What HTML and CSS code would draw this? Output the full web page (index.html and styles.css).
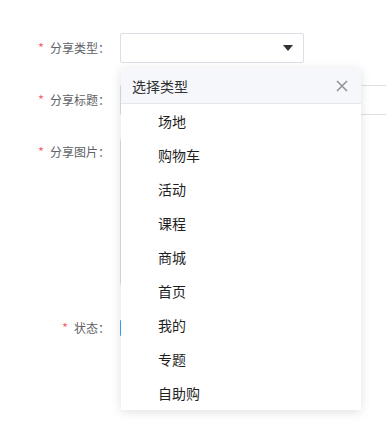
FILE: index.html
```html
<!DOCTYPE html>
<html lang="zh">
<head>
<meta charset="utf-8">
<link rel="stylesheet" href="styles.css">
</head>
<body>
<form class="form">
  <div class="row row-select">
    <label class="label"><span class="star">*</span>分享类型：</label>
    <div class="control">
      <div class="select">
        <span class="arrow"></span>
      </div>
      <div class="dropdown">
        <div class="dd-head">
          <span>选择类型</span>
          <svg class="close" width="12" height="12" viewBox="0 0 12 12"><path d="M1 1L11 11M11 1L1 11" stroke="#909399" stroke-width="1.6" fill="none"/></svg>
        </div>
        <ul class="dd-list">
          <li>场地</li>
          <li>购物车</li>
          <li>活动</li>
          <li>课程</li>
          <li>商城</li>
          <li>首页</li>
          <li>我的</li>
          <li>专题</li>
          <li>自助购</li>
        </ul>
      </div>
    </div>
  </div>
  <div class="row">
    <label class="label"><span class="star">*</span>分享标题：</label>
    <div class="control"><div class="input"></div></div>
  </div>
  <div class="row row-upload">
    <label class="label"><span class="star">*</span>分享图片：</label>
    <div class="control"><div class="upload"></div></div>
  </div>
  <div class="row row-switch">
    <label class="label"><span class="star">*</span>状态：</label>
    <div class="control"><div class="switch"></div></div>
  </div>
</form>
</body>
</html>
```
FILE: styles.css
```css
html, body {
  margin: 0;
  padding: 0;
  overflow: hidden;
  background: #fff;
}
body {
  font-family: "Noto Sans CJK SC", "Microsoft YaHei", sans-serif;
  width: 386px;
  height: 437px;
}
.form {
  padding-top: 33px;
  display: flex;
  flex-direction: column;
  gap: 22px;
}
.row {
  display: flex;
  align-items: flex-start;
  height: 30px;
}
.row-upload { height: 150px; }
.row-switch { margin-top: 4px; }
.label {
  width: 110px;
  flex: none;
  text-align: right;
  font-size: 12px;
  line-height: 30px;
  color: #606266;
  margin-right: 10px;
}
.star {
  color: #f56c6c;
  margin-right: 6px;
  font-size: 13px;
}
.control {
  position: relative;
  flex: none;
}
.select {
  height: 28px;
  border: 1px solid #dcdfe6;
  border-radius: 2px;
  display: flex;
  align-items: center;
  justify-content: flex-end;
  padding-right: 10px;
  box-sizing: content-box;
  width: 172px;
}
.arrow {
  width: 0;
  height: 0;
  border-left: 5px solid transparent;
  border-right: 5px solid transparent;
  border-top: 6px solid #303133;
}
.input {
  width: 265px;
  height: 28px;
  border: 1px solid #dcdfe6;
  border-right: none;
  border-radius: 2px 0 0 2px;
}
.upload {
  width: 148px;
  height: 148px;
  border: 1px solid #dcdfe6;
  border-radius: 4px;
}
.switch {
  margin-top: 7px;
  width: 40px;
  height: 16px;
  background: #409eff;
  border-radius: 1px;
}
.dropdown {
  position: absolute;
  left: 1px;
  top: 35px;
  width: 240px;
  background: #fff;
  box-shadow: 0 2px 10px rgba(0, 0, 0, 0.12);
  z-index: 10;
}
.dd-head {
  height: 35px;
  background: #f5f7fa;
  border-bottom: 1px solid #e4e7ed;
  display: flex;
  align-items: center;
  justify-content: space-between;
  padding: 0 13px 0 11px;
  font-size: 14px;
  color: #303133;
}
.close { display: block; }
.dd-list {
  list-style: none;
  margin: 0;
  padding: 0;
}
.dd-list li {
  height: 34px;
  line-height: 34px;
  padding-left: 37px;
  font-size: 14px;
  color: #1f1f1f;
}
```
